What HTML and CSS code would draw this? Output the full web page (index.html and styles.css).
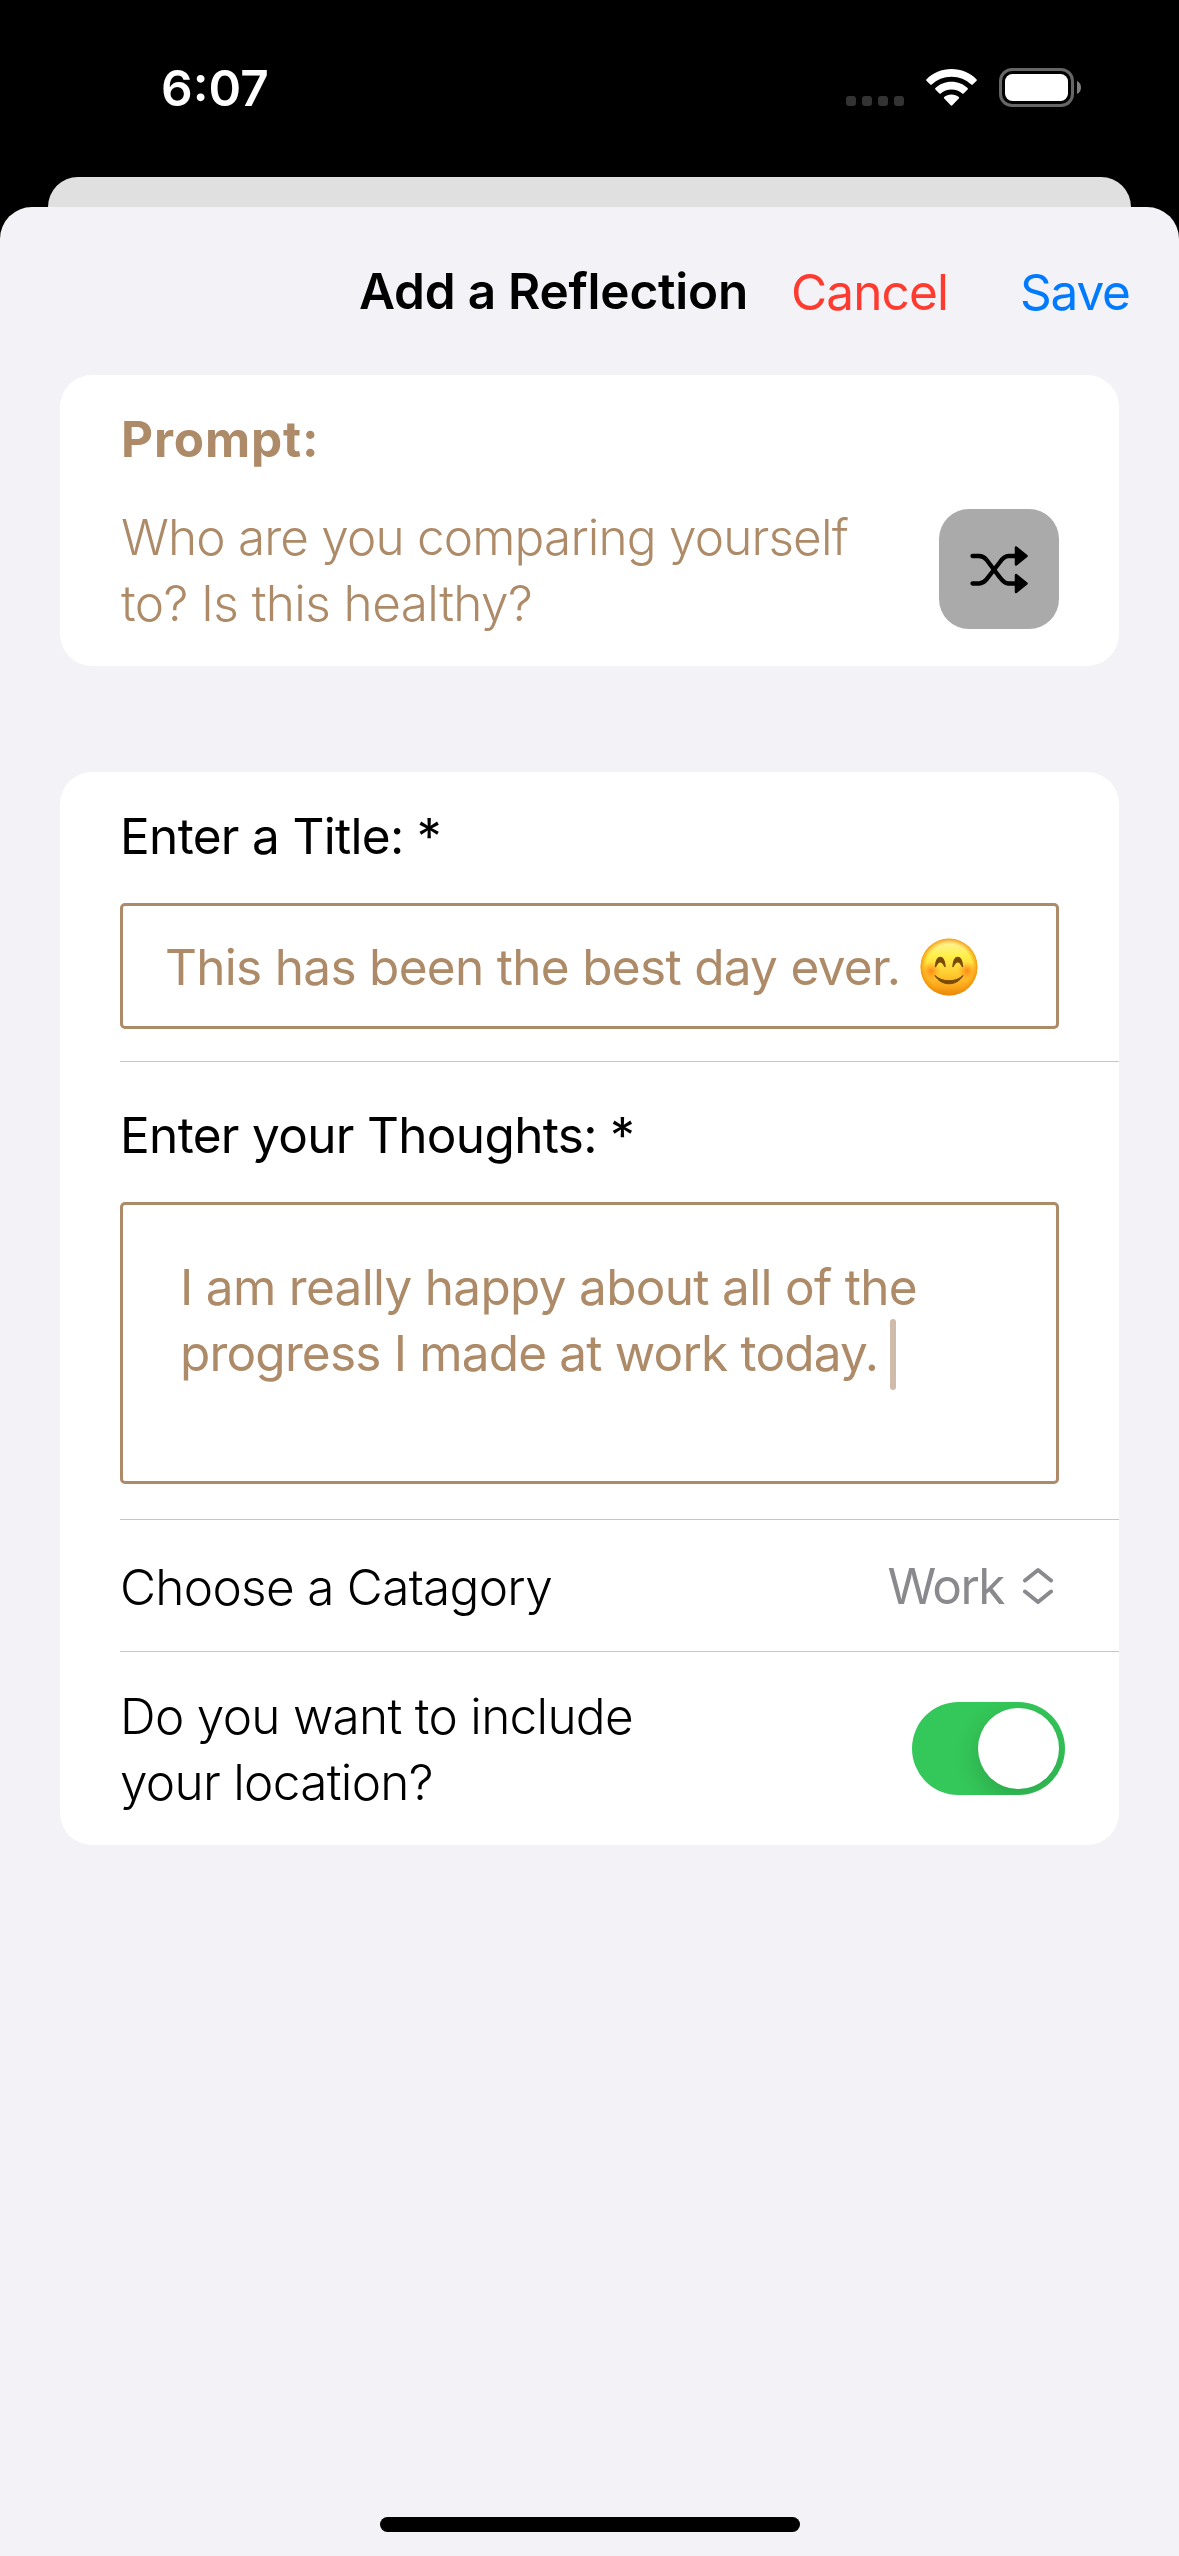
FILE: index.html
```
<!DOCTYPE html>
<html lang="en">
<head>
<meta charset="utf-8">
<title>Add a Reflection</title>
<link rel="stylesheet" href="styles.css">
</head>
<body>
<div class="screen">
  <div class="status">
    <span class="time">6:07</span>
    <div class="indicators">
      <div class="signal"><i></i><i></i><i></i><i></i></div>
      <svg class="wifi" viewBox="0 0 51 37" width="51" height="37" aria-hidden="true">
        <g fill="#fff">
          <path d="M25.500 0C35.300 0 44.300 3.800 50.600 10.400Q51.200 11.100 50.600 11.800L46.700 15.600Q46 16.200 45.300 15.600C40.200 10.700 33.200 7.700 25.500 7.700C17.800 7.700 10.800 10.700 5.700 15.600Q5 16.200 4.300 15.600L.4 11.800Q-.2 11.100 .4 10.400C6.700 3.800 15.700 0 25.500 0Z"/>
          <path d="M25.500 12.800C31.900 12.800 37.500 15.200 41.600 19.100Q42.300 19.800 41.600 20.500L37.600 24.400Q36.900 25 36.200 24.400C33.400 21.900 29.700 20.400 25.500 20.400C21.300 20.400 17.600 21.900 14.800 24.400Q14.100 25 13.400 24.400L9.400 20.500Q8.700 19.800 9.400 19.100C13.500 15.200 19.100 12.800 25.500 12.800Z"/>
          <path d="M25.500 25.400C28.400 25.400 30.900 26.300 32.800 28Q33.500 28.700 32.800 29.400L26.300 36.300Q25.500 37.100 24.700 36.300L18.200 29.400Q17.500 28.700 18.200 28C20.100 26.300 22.600 25.400 25.500 25.400Z"/>
        </g>
      </svg>
      <svg class="battery" viewBox="0 0 82 39" width="82" height="39" aria-hidden="true">
        <rect x="1.500" y="1.500" width="72" height="36" rx="11.500" fill="none" stroke="#666" stroke-width="3"/>
        <rect x="6" y="6" width="63" height="27" rx="7.500" fill="#fff"/>
        <path d="M78 13C80.500 14 82 16.500 82 19.500S80.500 25 78 26Z" fill="#7f7f7f"/>
      </svg>
    </div>
  </div>
  <div class="back-sheet"></div>
  <main class="sheet">
    <header class="nav">
      <h1 class="nav-title">Add a Reflection</h1>
      <span class="cancel">Cancel</span>
      <span class="save">Save</span>
    </header>

    <section class="card prompt">
      <h2 class="prompt-title">Prompt:</h2>
      <div class="prompt-row">
        <p class="prompt-text"><span class="wide">Who are you comparing yourself</span><br>to? Is this healthy?</p>
        <div class="shuffle">
          <svg viewBox="0 0 58 48" width="58" height="48" aria-hidden="true">
            <g fill="none" stroke="#000" stroke-width="4.300" stroke-linecap="round">
              <path d="M2.500 10H9C12.500 10 14.500 11.200 16.700 14L30 31.600C32.200 34.700 34.500 37.500 38.500 37.500H46"/>
              <path d="M2.500 37.500H9C12.500 37.500 14.500 36 16.700 33.200L30 16C32.200 12.900 34.500 10 38.500 10H46"/>
            </g>
            <path d="M46 1.500L56.500 10L46 18.500ZM46 29L56.500 37.500L46 46Z" stroke="#000" stroke-width="2.500" stroke-linejoin="round"/>
          </svg>
        </div>
      </div>
    </section>

    <section class="card form">
      <div class="group title-group">
        <label>Enter a Title: *</label>
        <div class="field title-field">
          <span>This has been the best day ever.</span>
          <svg class="emoji" viewBox="0 0 58 58" width="58" height="58" role="img" aria-label="😊">
            <defs>
              <linearGradient id="face" x1="0" y1="0" x2="0" y2="1">
                <stop offset="0" stop-color="#fff3a8"/>
                <stop offset=".3" stop-color="#fff04a"/>
                <stop offset=".6" stop-color="#ffcf33"/>
                <stop offset=".85" stop-color="#fba61b"/>
                <stop offset="1" stop-color="#e08008"/>
              </linearGradient>
              <radialGradient id="rim">
                <stop offset=".8" stop-color="#f89c0e" stop-opacity="0"/>
                <stop offset="1" stop-color="#f08c06" stop-opacity=".85"/>
              </radialGradient>
              <radialGradient id="cheek">
                <stop offset="0" stop-color="#ff7410" stop-opacity=".8"/>
                <stop offset="1" stop-color="#ff8c1a" stop-opacity="0"/>
              </radialGradient>
            </defs>
            <circle cx="29" cy="29" r="28.500" fill="url(#face)"/>
            <circle cx="29" cy="29" r="28.500" fill="url(#rim)"/>
            <circle cx="11" cy="33" r="9.500" fill="url(#cheek)"/>
            <circle cx="47" cy="33" r="9.500" fill="url(#cheek)"/>
            <path d="M15.500 28.500C16.500 16.500 24 16.500 25 28.500C22 22 18.500 22 15.500 28.500ZM33 28.500C34 16.500 41.500 16.500 42.500 28.500C39.500 22 36 22 33 28.500Z" fill="#794a05" stroke="#794a05" stroke-width="1.500" stroke-linejoin="round"/>
            <path d="M15 37.500C22 44.500 36 44.500 43 37.500C37 48.500 21 48.500 15 37.500Z" fill="#794a05" stroke="#794a05" stroke-linejoin="round"/>
          </svg>
        </div>
      </div>
      <div class="group thoughts-group">
        <label>Enter your Thoughts: *</label>
        <div class="field thoughts-field">
          <p>I am really happy about all of the</p>
          <p class="last-line">progress I made at work today.<i class="caret"></i></p>
        </div>
      </div>
      <div class="group category">
        <span class="light">Choose a Catagory</span>
        <div class="picker">
          <span class="picker-value">Work</span>
          <svg viewBox="0 0 30 38" width="30" height="38" fill="none" stroke="#8a8a8e" stroke-width="4" stroke-linecap="round" stroke-linejoin="round" aria-hidden="true">
            <path d="M2 13.500L15 3L28 13.500M2 24.500L15 35L28 24.500"/>
          </svg>
        </div>
      </div>
      <div class="group location">
        <p class="light">Do you want to include<br>your location?</p>
        <div class="toggle"><i class="knob"></i></div>
      </div>
    </section>
    <div class="home"></div>
  </main>
</div>
</body>
</html>
```
FILE: styles.css
```
* {
  box-sizing: border-box;
  margin: 0;
  padding: 0;
}

body {
  background: #000;
  font-family: Inter, "Liberation Sans", sans-serif;
  font-size: 49.5px;
  line-height: 66px;
  letter-spacing: -0.7px;
  color: #000;
}

svg {
  display: block;
  flex: none;
}

.screen {
  width: 1179px;
  height: 2556px;
  display: flex;
  flex-direction: column;
  overflow: hidden;
}

/* Status bar */
.status {
  height: 177px;
  padding: 55px 98px 0 161px;
  display: flex;
  justify-content: space-between;
  align-items: flex-start;
  flex: none;
}

.time {
  color: #fff;
  font-weight: 600;
  letter-spacing: 0;
}

.indicators {
  display: flex;
  margin-top: 13px;
}

.signal {
  display: flex;
  gap: 6px;
  margin: 28px 22px 0 0;
}

.signal i {
  width: 10px;
  height: 10px;
  border-radius: 3px;
  background: #333;
}

.wifi {
  margin: 1px 22px 0 0;
}

/* Sheets */
.back-sheet {
  height: 30px;
  margin: 0 48px;
  border-radius: 30px 30px 0 0;
  background: #e0e0e0;
  flex: none;
}

.sheet {
  flex: 1;
  display: flex;
  flex-direction: column;
  background: #f2f2f7;
  border-radius: 32px 32px 0 0;
}

.nav {
  height: 168px;
  padding: 51px 49px 0 359px;
  display: flex;
  align-items: flex-start;
  white-space: nowrap;
}

.nav-title {
  width: 432px;
  font-size: inherit;
  font-weight: 600;
  letter-spacing: -0.22px;
}

.cancel {
  width: 229px;
  margin-top: 1px;
  color: #ff3b30;
  letter-spacing: -0.87px;
}

.save {
  margin-top: 1px;
  color: #007aff;
  letter-spacing: -1.2px;
}

/* Cards */
.card {
  margin: 0 60px;
  padding-left: 60px;
  border-radius: 32px;
  background: #fff;
}

.prompt {
  height: 291px;
  padding-top: 31px;
  color: #ae8b68;
}

.prompt-title {
  font-size: inherit;
  font-weight: 700;
  letter-spacing: 0.85px;
  margin-left: 1px;
}

.prompt-row {
  display: flex;
  justify-content: space-between;
  padding-right: 60px;
  margin-top: 32px;
}

.prompt-text {
  font-weight: 300;
  letter-spacing: -0.6px;
  padding-left: 1px;
}

.wide {
  letter-spacing: -0.84px;
}

.shuffle {
  width: 120px;
  height: 120px;
  margin-top: 5px;
  padding: 1px 1px 0 0;
  border-radius: 30px;
  background: #aaa;
  display: flex;
  align-items: center;
  justify-content: center;
}

.form {
  margin-top: 106px;
}

.group + .group {
  border-top: 1px solid #c6c6c8;
}

.group label {
  display: block;
  letter-spacing: -0.68px;
}

.field {
  width: 939px;
  margin-top: 34px;
  border: 3px solid #ae8b68;
  border-radius: 5px;
  color: #ae8b68;
}

.title-group {
  height: 289px;
  padding-top: 31px;
}

.title-field {
  height: 126px;
  padding: 1px 0 0 42px;
  display: flex;
  align-items: center;
  gap: 20px;
}

.thoughts-group {
  height: 458px;
  padding-top: 40px;
}

.thoughts-field {
  height: 282px;
  padding: 49px 0 0 57px;
}

.thoughts-field .last-line {
  display: flex;
  align-items: center;
  letter-spacing: -0.82px;
}

.caret {
  width: 6px;
  height: 71px;
  margin: -1px 0 -4px 12px;
  border-radius: 3px;
  background: #d0baaa;
}

.category {
  height: 132px;
  padding: 3px 66px 0 0;
  display: flex;
  align-items: center;
  justify-content: space-between;
}

.light {
  font-weight: 300;
}

.picker {
  display: flex;
  align-items: center;
  gap: 19px;
  margin-top: -2px;
  color: #8a8a8e;
}

.picker-value {
  letter-spacing: -1.5px;
}

.location {
  height: 194px;
  padding: 0 54px 0 0;
  display: flex;
  align-items: center;
  justify-content: space-between;
}

.toggle {
  width: 153px;
  height: 93px;
  padding: 6px;
  border-radius: 47px;
  background: #34c759;
  display: flex;
  justify-content: flex-end;
  overflow: hidden;
}

.knob {
  width: 81px;
  height: 81px;
  border-radius: 50%;
  background: #fff;
  box-shadow: 0 9px 24px rgba(0, 0, 0, 0.17);
}

/* Home indicator */
.home {
  width: 420px;
  height: 15px;
  margin: auto 0 24px 380px;
  border-radius: 8px;
  background: #000;
}
```
